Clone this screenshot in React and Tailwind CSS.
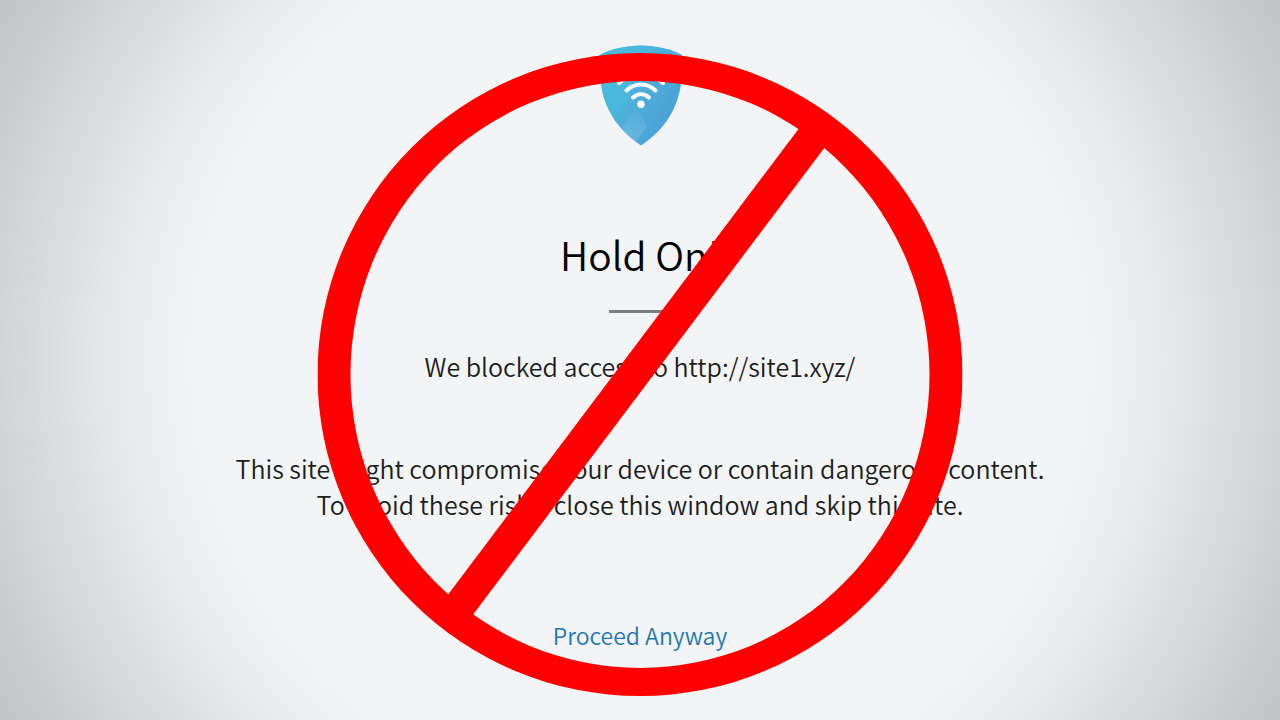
export default function App() {
  return (
    <main className="relative flex min-h-screen flex-col items-center overflow-hidden bg-[radial-gradient(circle_at_center,#f3f4f6_445px,#e5e6e8_540px,#d2d3d4_642px,#c2c3c4_734px)] pt-[45px] pb-16 text-center font-['Noto_Sans_CJK_SC','Noto_Sans',sans-serif] font-[350] text-[#1c1e20]">
      <svg className="ml-[2px] h-[101px] w-[84px]" viewBox="0 0 84 101" role="img" aria-label="Wi-Fi shield">
        <defs>
          <linearGradient id="shield" x1="0" y1="0" x2="1" y2="0.6">
            <stop offset="0" stopColor="#4dbcdc" />
            <stop offset="0.5" stopColor="#4fb0da" />
            <stop offset="1" stopColor="#4a9fd4" />
          </linearGradient>
          <linearGradient id="facet" x1="0.4" y1="0" x2="0.4" y2="1">
            <stop offset="0" stopColor="#74bde2" stopOpacity="0" />
            <stop offset="0.8" stopColor="#7cc2e4" stopOpacity="0.5" />
            <stop offset="1" stopColor="#7cc2e4" stopOpacity="0.2" />
          </linearGradient>
          <clipPath id="shieldClip">
            <path d="M42 .5C57 .5 72 4 83 10C85.500 50 74 79 42 100.500C10 79 -1.500 50 .5 10C12 4 27 .5 42 .5Z" />
          </clipPath>
        </defs>
        <g clipPath="url(#shieldClip)">
          <rect width="84" height="101" fill="url(#shield)" />
          <path d="M0 0H56L17 78L0 60Z" fill="#43bedb" opacity=".5" />
          <path d="M38 60L48 82L36 98L20 88Z" fill="url(#facet)" />
        </g>
        <g fill="none" stroke="#fff" strokeWidth="4" strokeLinecap="round">
          <path d="M20 38C32 26.500 52 26.500 64 38" />
          <path d="M27.500 45.500C36 37.500 48 37.500 56.500 45.500" />
          <path d="M34 52.500C39 48 45 48 50 52.500" />
        </g>
        <circle cx="42" cy="59.300" r="3.700" fill="#fff" />
      </svg>

      <h1 className="mt-[78px] text-[39px] leading-[60px] font-[350] text-black">Hold On!</h1>
      <hr className="mt-[26px] w-[62px] border-0 border-t-[3px] border-[#7d7e80]" />
      <p className="mt-[35px] text-[25px] leading-9">We blocked access to http://site1.xyz/</p>
      <p className="mt-[66px] px-4 text-[25px] leading-9">
        This site might compromise your device or contain dangerous content.
        <br />
        To avoid these risks, close this window and skip this site.
      </p>
      <a href="#proceed" className="mt-[95px] text-[23px] leading-9 text-[#2277b3]">Proceed Anyway</a>

      <svg
        className="pointer-events-none absolute top-[53px] left-1/2 h-[643px] w-[645px] -translate-x-1/2"
        viewBox="318 53 645 643"
        aria-hidden="true"
      >
        <path
          fill="#f00"
          fillRule="evenodd"
          d="M318 374.500a322.500 321.500 0 1 0 645 0a322.500 321.500 0 1 0 -645 0ZM351 374.500a289.500 293.500 0 1 1 579 0a289.500 293.500 0 1 1 -579 0Z"
        />
        <path fill="#f00" d="M799 129L815 110L842 125L824 149L474 614L460 632L435 613L449 594Z" />
      </svg>
    </main>
  );
}
